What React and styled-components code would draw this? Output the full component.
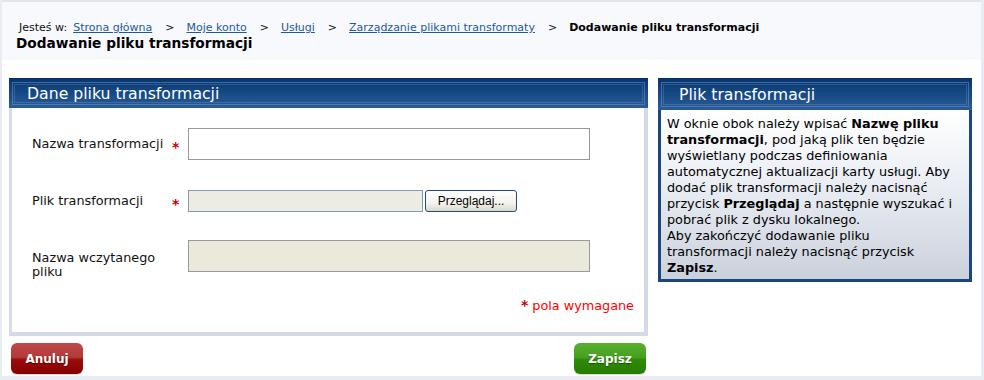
import styled, { createGlobalStyle } from "styled-components";

const GlobalStyle = createGlobalStyle`
  html, body {
    margin: 0;
    padding: 0;
  }

  body {
    background: #e9edf3;
    font-family: "DejaVu Sans", Verdana, sans-serif;
    color: #111;
  }
`;

const Page = styled.div`
  width: 979px;
  height: 376px;
  margin-left: 2px;
  background: #fff;
`;

const Top = styled.header`
  box-sizing: border-box;
  height: 60px;
  padding: 19px 0 0 14px;
  background: #f8f9fc;
  border-top: 2px solid #e2e6ec;
`;

const Crumbs = styled.nav`
  display: flex;
  align-items: center;
  margin-left: 3px;
  font-size: 11px;
  line-height: 14px;
  color: #111;

  .lead {
    margin-right: 6px;
  }

  a {
    color: #1d5a9c;
    text-decoration: underline;
  }

  .sep {
    margin: 0 12px 0 13px;
  }

  strong {
    color: #000;
  }
`;

const Title = styled.h1`
  margin: 0;
  font-size: 13.7px;
  line-height: 16px;
  font-weight: bold;
  color: #000;
`;

const Main = styled.main`
  display: flex;
  align-items: flex-start;
  gap: 10px;
  padding: 18px 0 0 7px;
`;

const LeftCol = styled.div`
  width: 639px;
`;

const PanelHeader = styled.div`
  position: relative;
  box-sizing: border-box;
  height: ${(p) => p.$height}px;
  padding-left: ${(p) => p.$indent}px;
  display: flex;
  align-items: center;
  background: linear-gradient(#08366f 0%, #154883 45%, #2b5c98 100%);
  border-top: 1px solid #082f62;
  color: #fff;
  font-size: 15.7px;

  &::before,
  &::after {
    content: "";
    position: absolute;
    pointer-events: none;
  }

  &::before {
    inset: 3px;
    border: 1px solid rgba(130, 165, 210, 0.45);
  }

  &::after {
    inset: 5px;
    border: 1px solid rgba(130, 165, 210, 0.28);
  }
`;

const FormBody = styled.div`
  padding: 20px 10px 18px 20px;
  background: #fff;
  border-left: 3px solid #d5dce7;
  border-right: 4px solid #d3dae5;
  border-bottom: 4px solid #d3dae5;
`;

const Field = styled.div`
  display: grid;
  grid-template-columns: 138px 18px 402px;
  align-items: ${(p) => (p.$top ? "start" : "center")};
  margin-top: ${(p) => p.$gap || 0}px;
`;

const Label = styled.label`
  font-size: 12.8px;
  line-height: 14px;
  color: #111;
  padding-top: ${(p) => p.$pad || 0}px;
`;

const Star = styled.span`
  color: #c80000;
  font-weight: bold;
  font-size: 14px;
  line-height: 14px;
  padding-top: 6px;
  padding-left: 2px;
`;

const TextInput = styled.input`
  box-sizing: border-box;
  width: 402px;
  height: 32px;
  margin: 0;
  border: 1px solid #999;
  background: ${(p) => (p.$disabled ? "#ebe9db" : "#fff")};
  font: 12px "DejaVu Sans", Verdana, sans-serif;
`;

const FileRow = styled.div`
  display: flex;
  gap: 2px;
`;

const FileBox = styled.div`
  box-sizing: border-box;
  width: 235px;
  height: 22px;
  border: 1px solid #7f9db9;
  background: #ecebe4;
`;

const BrowseButton = styled.button`
  box-sizing: border-box;
  width: 92px;
  height: 22px;
  padding: 0;
  border: 1px solid #1f4c7e;
  border-radius: 3px;
  background: linear-gradient(#ffffff 0%, #f4f3ee 60%, #dcd8c8 100%);
  font: 12px "Liberation Sans", Arial, sans-serif;
  color: #000;
`;

const Required = styled.div`
  margin-top: 18px;
  text-align: right;
  font-size: 12.8px;
  line-height: 16px;
  color: #ff0000;

  b {
    color: #c80000;
    font-size: 14px;
    margin-right: 4px;
  }
`;

const Actions = styled.div`
  display: flex;
  justify-content: space-between;
  margin-top: 7px;
  padding: 0 2px;
`;

const ActionButton = styled.button`
  width: 72px;
  height: 31px;
  padding: 0;
  border: none;
  border-radius: 6px;
  color: #fff;
  font: bold 12px "DejaVu Sans", Verdana, sans-serif;
  text-shadow: 0 1px 1px rgba(0, 0, 0, 0.4);
  background: ${(p) =>
    p.$tone === "red"
      ? "linear-gradient(#c04848 0%, #b23a3a 46%, #9a0b0b 54%, #860000 100%)"
      : "linear-gradient(#58b02f 0%, #46a020 46%, #2f8a07 54%, #277c00 100%)"};
  box-shadow: 0 1px 1px rgba(0, 0, 0, 0.15);
`;

const InfoPanel = styled.aside`
  width: 314px;
`;

const InfoBody = styled.div`
  padding: 6px 6px 3px 6px;
  border: 3px solid #1c477b;
  border-top: none;
  background: linear-gradient(#ffffff 0%, #e9edf3 45%, #cbd1dc 100%);
  font-size: 12.8px;
  line-height: 16px;
  color: #000;
  white-space: nowrap;
`;

const infoLines = [
  <>W oknie obok należy wpisać <b>Nazwę pliku</b></>,
  <><b>transformacji</b>, pod jaką plik ten będzie</>,
  <>wyświetlany podczas definiowania</>,
  <>automatycznej aktualizacji karty usługi. Aby</>,
  <>dodać plik transformacji należy nacisnąć</>,
  <>przycisk <b>Przeglądaj</b> a następnie wyszukać i</>,
  <>pobrać plik z dysku lokalnego.</>,
  <>Aby zakończyć dodawanie pliku</>,
  <>transformacji należy nacisnąć przycisk</>,
  <><b>Zapisz</b>.</>,
];

export default function App() {
  return (
    <>
      <GlobalStyle />
      <Page>
        <Top>
          <Crumbs>
            <span className="lead">Jesteś w:</span>
            <a href="#">Strona główna</a>
            <span className="sep">&gt;</span>
            <a href="#">Moje konto</a>
            <span className="sep">&gt;</span>
            <a href="#">Usługi</a>
            <span className="sep">&gt;</span>
            <a href="#">Zarządzanie plikami transformaty</a>
            <span className="sep">&gt;</span>
            <strong>Dodawanie pliku transformacji</strong>
          </Crumbs>
          <Title>Dodawanie pliku transformacji</Title>
        </Top>

        <Main>
          <LeftCol>
            <PanelHeader $height={30} $indent={18}>
              Dane pliku transformacji
            </PanelHeader>
            <FormBody>
              <Field>
                <Label>Nazwa transformacji</Label>
                <Star>*</Star>
                <TextInput type="text" />
              </Field>
              <Field $gap={30}>
                <Label>Plik transformacji</Label>
                <Star>*</Star>
                <FileRow>
                  <FileBox />
                  <BrowseButton type="button">Przeglądaj...</BrowseButton>
                </FileRow>
              </Field>
              <Field $gap={28} $top>
                <Label $pad={11}>
                  Nazwa wczytanego
                  <br />
                  pliku
                </Label>
                <span />
                <TextInput type="text" $disabled readOnly />
              </Field>
              <Required>
                <b>*</b>pola wymagane
              </Required>
            </FormBody>
            <Actions>
              <ActionButton $tone="red">Anuluj</ActionButton>
              <ActionButton $tone="green">Zapisz</ActionButton>
            </Actions>
          </LeftCol>

          <InfoPanel>
            <PanelHeader $height={32} $indent={21}>
              Plik transformacji
            </PanelHeader>
            <InfoBody>
              {infoLines.map((line, i) => (
                <div key={i}>{line}</div>
              ))}
            </InfoBody>
          </InfoPanel>
        </Main>
      </Page>
    </>
  );
}
